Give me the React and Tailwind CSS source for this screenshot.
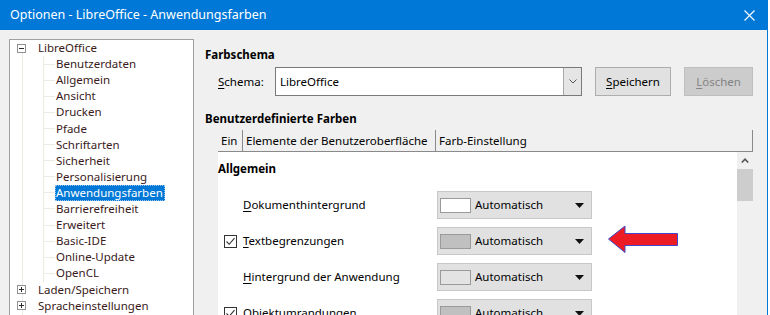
import React from 'react';

const treeChildren = [
    'Benutzerdaten', 'Allgemein', 'Ansicht', 'Drucken', 'Pfade', 'Schriftarten', 'Sicherheit',
    'Personalisierung', 'Anwendungsfarben', 'Barrierefreiheit', 'Erweitert', 'Basic-IDE', 'Online-Update', 'OpenCL',
];

const rows = [
    { label: 'Dokumenthintergrund', key: 'D', rest: 'okumenthintergrund', check: false, swatch: 'bg-white' },
    { label: 'Textbegrenzungen', key: 'T', rest: 'extbegrenzungen', check: true, swatch: 'bg-[#c0c0c0]' },
    { label: 'Hintergrund der Anwendung', key: 'H', rest: 'intergrund der Anwendung', check: false, swatch: 'bg-[#e3e3e3]' },
    { label: 'Objektumrandungen', key: 'O', rest: 'bjektumrandungen', check: true, swatch: 'bg-[#c0c0c0]' },
];

const ExpandBox = ({ open }) => (
    <div className="w-[9px] h-[9px] border border-[#919191] bg-white flex items-center justify-center relative">
        <div className="w-[5px] h-px bg-[#2b2b2b]" />
        {!open && <div className="absolute w-px h-[5px] bg-[#2b2b2b]" />}
    </div>
);

const CheckBox = () => (
    <div className="w-[13px] h-[13px] border border-[#333] bg-white flex items-center justify-center">
        <svg width="11" height="11" viewBox="0 0 11 11">
            <path d="M1.5 5.5 L4.2 8.3 L9.5 2.2" fill="none" stroke="#333" strokeWidth="1.1" />
        </svg>
    </div>
);

export default function App() {
    return (
        <div className="w-[770px] h-[315px] overflow-hidden bg-white text-[11.5px] text-black relative" style={{ fontFamily: '"Noto Sans", sans-serif' }}>
            <div className="w-[768px] h-full flex flex-col border-r border-[#0078d7]">
                {/* Title bar */}
                <div className="h-[30px] shrink-0 bg-[#0078d7] flex items-center justify-between pl-[10px] pr-[12px] text-white text-[12.5px]">
                    <span>Optionen - LibreOffice - Anwendungsfarben</span>
                    <svg width="11" height="11" viewBox="0 0 11 11">
                        <path d="M0.5 0.5 L10.5 10.5 M10.5 0.5 L0.5 10.5" stroke="white" strokeWidth="1.1" />
                    </svg>
                </div>

                <div className="flex-1 flex bg-[#f0f0f0] pl-[9px] pt-[9px] min-h-0">
                    {/* Tree */}
                    <div className="w-[185px] shrink-0 bg-white border border-[#a0a0a0] border-b-0 relative text-[#3a1a1a]">
                        <div className="absolute left-[12px] top-[10px] w-px h-[270px] bg-[#ecece4]" />
                        <div className="absolute left-[33px] top-[16px] w-px h-[227px] bg-[#ecece4]" />
                        <div>
                            <div className="h-[16.1px] flex items-center">
                                <div className="w-[27px] pl-[7px]"><ExpandBox open /></div>
                                <span className="pl-px">LibreOffice</span>
                            </div>
                            {treeChildren.map((t) => (
                                <div key={t} className="h-[16.1px] flex items-center">
                                    <div className="w-[33px] shrink-0" />
                                    <div className="w-[12px] h-px bg-[#ecece4]" />
                                    <span className={t === 'Anwendungsfarben'
                                        ? 'bg-[#0078d7] text-white pl-px pr-[2px] leading-[16px] outline outline-1 outline-dotted outline-[#9ac3ec] -outline-offset-1'
                                        : 'pl-px leading-[16px]'}>
                                        {t}
                                    </span>
                                </div>
                            ))}
                            {['Laden/Speichern', 'Spracheinstellungen'].map((t) => (
                                <div key={t} className="h-[16.1px] flex items-center">
                                    <div className="w-[27px] pl-[7px]"><ExpandBox /></div>
                                    <span className="pl-px">{t}</span>
                                </div>
                            ))}
                        </div>
                    </div>

                    {/* Right panel */}
                    <div className="flex-1 pl-[11px] flex flex-col min-w-0">
                        <div className="mt-[8px] h-[16px] leading-[16px] font-bold">Farbschema</div>

                        <div className="mt-[4px] flex items-center h-[29px] pl-[13px]">
                            <span className="w-[57px]"><span className="underline underline-offset-2">S</span>chema:</span>
                            <div className="w-[307px] h-[29px] bg-white border border-[#7a7a7a] flex items-center">
                                <span className="flex-1 pl-[4px]">LibreOffice</span>
                                <div className="w-[18px] h-full border-l border-[#a8a8a8] bg-[#e5e5e5] flex items-center justify-center">
                                    <svg width="8" height="5" viewBox="0 0 8 5">
                                        <path d="M0.5 0.5 L4 4 L7.5 0.5" fill="none" stroke="#555" strokeWidth="1" />
                                    </svg>
                                </div>
                            </div>
                            <div className="ml-[13px] w-[76px] h-[29px] bg-[#e1e1e1] border border-[#adadad] flex items-center justify-center">
                                <span><span className="underline underline-offset-2">S</span>peichern</span>
                            </div>
                            <div className="ml-[13px] w-[69px] h-[29px] bg-[#cccccc] border border-[#bfbfbf] flex items-center justify-center text-[#838383]">
                                <span><span className="underline underline-offset-2">L</span>öschen</span>
                            </div>
                        </div>

                        <div className="mt-[15px] h-[16px] leading-[16px] font-bold">Benutzerdefinierte Farben</div>

                        {/* Table */}
                        <div className="mt-[3px] ml-[13px] w-[535px] flex-1 flex flex-col min-h-0">
                            <div className="h-[22px] shrink-0 flex border-b border-r border-[#8a8a8a]">
                                <div className="w-[25px] pl-[3px] flex items-center border-r border-[#8a8a8a]">Ein</div>
                                <div className="w-[193px] pl-[3px] flex items-center border-r border-[#8a8a8a]">Elemente der Benutzeroberfläche</div>
                                <div className="flex-1 pl-[3px] flex items-center">Farb-Einstellung</div>
                            </div>
                            <div className="flex-1 flex min-h-0">
                                <div className="w-[519px] bg-white">
                                    <div className="mt-[9px] h-[16px] leading-[16px] font-bold">Allgemein</div>
                                    <div className="mt-[14px] flex flex-col gap-[8px]">
                                        {rows.map((r) => (
                                            <div key={r.label} className="h-[28px] flex items-center">
                                                <div className="w-[25px] pl-[6px] flex items-center">
                                                    {r.check && <CheckBox />}
                                                </div>
                                                <div className="w-[194px]">
                                                    <span className="underline underline-offset-2">{r.key}</span>{r.rest}
                                                </div>
                                                <div className="w-[155px] h-[28px] bg-[#e1e1e1] border border-[#c8c8c8] flex items-center pl-[2px] pr-[7px]">
                                                    <div className={`w-[31px] h-[15px] border border-[#9a9a9a] ${r.swatch}`} />
                                                    <span className="flex-1 pl-[4px]">Automatisch</span>
                                                    <svg width="9" height="5" viewBox="0 0 9 5">
                                                        <path d="M0 0 L9 0 L4.5 5 Z" fill="#111" />
                                                    </svg>
                                                </div>
                                            </div>
                                        ))}
                                    </div>
                                </div>
                                {/* Scrollbar */}
                                <div className="w-[16px] bg-[#f0f0f0] flex flex-col items-center">
                                    <div className="h-[17px] flex items-center justify-center">
                                        <svg width="8" height="5" viewBox="0 0 8 5">
                                            <path d="M0.8 4.5 L4 1.2 L7.2 4.5" fill="none" stroke="#555" strokeWidth="1.6" />
                                        </svg>
                                    </div>
                                    <div className="w-full h-[32px] bg-[#cdcdcd]" />
                                </div>
                            </div>
                        </div>
                    </div>
                </div>
            </div>

            {/* Annotation arrow */}
            <svg className="absolute left-[608px] top-[225px]" width="71" height="29" viewBox="0 0 71 29">
                <polygon points="0.5,14 17,1 17,8.5 69.5,8.5 69.5,20.5 17,20.5 17,27.5" fill="#ed1c24" stroke="#3f48cc" strokeWidth="1" />
            </svg>
        </div>
    );
}
